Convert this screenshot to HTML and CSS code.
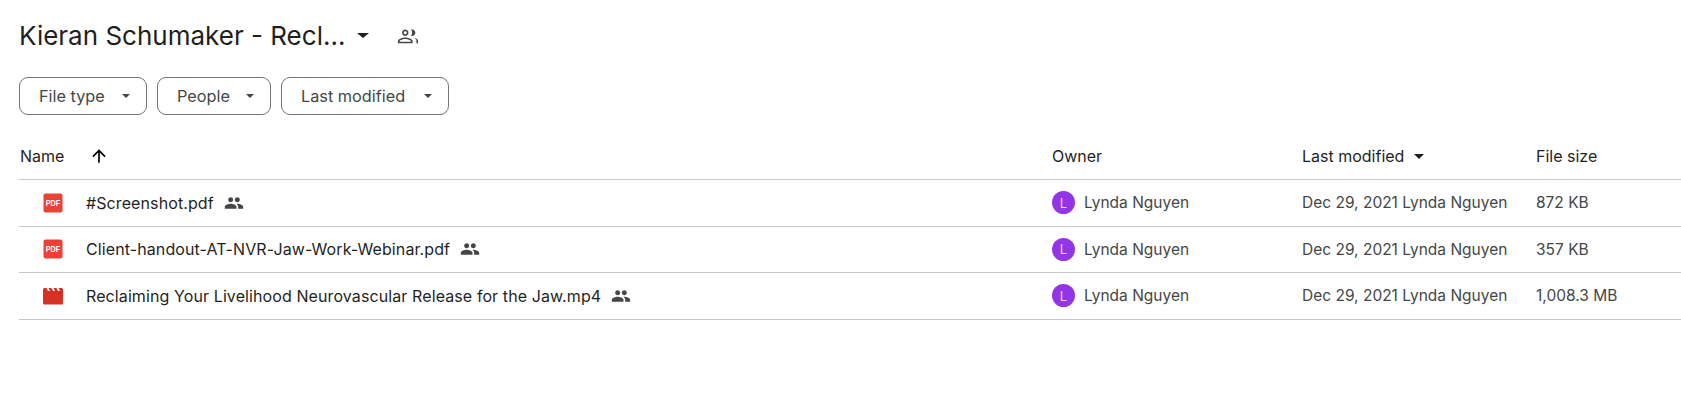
FILE: index.html
```html
<!DOCTYPE html>
<html lang="en">
<head>
  <meta charset="UTF-8" />
  <title>Kieran Schumaker - Reclaiming</title>
  <link rel="stylesheet" href="styles.css">
</head>
<body>

  <!-- Folder title -->
  <div class="title-row">
    <h1>Kieran Schumaker - Recl...</h1>
    <span class="caret title-caret"></span>
    <svg class="shared-outline" viewBox="0 0 24 24"><path d="M16.5 12c1.93 0 3.5-1.57 3.5-3.5S18.43 5 16.5 5c-.4 0-.79.07-1.15.2.7.85 1.15 2 1.15 3.3s-.45 2.45-1.15 3.3c.36.13.75.2 1.15.2zM9 12c1.93 0 3.5-1.57 3.5-3.5S10.93 5 9 5 5.500 6.570 5.500 8.500 7.070 12 9 12zm0-5.200c.94 0 1.700.76 1.700 1.700s-.76 1.700-1.700 1.700-1.700-.76-1.700-1.700.76-1.700 1.700-1.700zM9 13.500c-2.670 0-8 1.340-8 4V20h16v-2.500c0-2.660-5.330-4-8-4zm-6.200 4.700v-.7c.2-.72 3.300-2.200 6.200-2.200s6 1.480 6.200 2.200v.7H2.800zM18.500 13.700c1.400.95 2.700 2.200 2.700 3.800V20H23v-2.500c0-2.030-2.900-3.300-4.500-3.800z"/></svg>
  </div>

  <!-- Filter chips -->
  <div class="filters">
    <button class="chip chip-type">File type <span class="caret"></span></button>
    <button class="chip chip-people">People <span class="caret"></span></button>
    <button class="chip chip-modified">Last modified <span class="caret"></span></button>
  </div>

  <!-- File list -->
  <div class="file-list">
    <div class="row head">
      <div class="cell name-head">Name
        <svg class="arrow" viewBox="0 0 24 24"><path d="M20 12l-1.410-1.410L13 16.170V4h-2v12.170l-5.580-5.590L4 12l8 8 8-8z" transform="rotate(180 12 12)"/></svg>
      </div>
      <div class="cell">Owner</div>
      <div class="cell">Last modified <span class="caret sort-caret"></span></div>
      <div class="cell">File size</div>
    </div>

    <div class="row">
      <div class="cell file">
        <svg class="file-icon" viewBox="0 0 20 20"><rect x="0.500" y="0.500" width="19" height="19" rx="2" fill="#ea4335"/><text class="pdf-label" x="10" y="13.200" textLength="14.500" lengthAdjust="spacingAndGlyphs">PDF</text></svg>
        <span class="file-name">#Screenshot.pdf</span>
        <svg class="shared" viewBox="0 0 24 24"><path d="M16 11c1.660 0 2.990-1.340 2.990-3S17.660 5 16 5s-3 1.340-3 3 1.340 3 3 3zm-8 0c1.660 0 2.990-1.340 2.990-3S9.660 5 8 5 5 6.340 5 8s1.340 3 3 3zm0 2c-2.330 0-7 1.170-7 3.500V19h14v-2.500c0-2.330-4.670-3.500-7-3.500zm8 0c-.29 0-.62.02-.97.05 1.160.84 1.970 1.970 1.970 3.450V19h6v-2.500c0-2.330-4.670-3.500-7-3.500z"/></svg>
      </div>
      <div class="cell muted owner"><span class="avatar">L</span>Lynda Nguyen</div>
      <div class="cell muted">Dec 29, 2021 Lynda Nguyen</div>
      <div class="cell muted">872 KB</div>
    </div>

    <div class="row">
      <div class="cell file">
        <svg class="file-icon" viewBox="0 0 20 20"><rect x="0.500" y="0.500" width="19" height="19" rx="2" fill="#ea4335"/><text class="pdf-label" x="10" y="13.200" textLength="14.500" lengthAdjust="spacingAndGlyphs">PDF</text></svg>
        <span class="file-name">Client-handout-AT-NVR-Jaw-Work-Webinar.pdf</span>
        <svg class="shared" viewBox="0 0 24 24"><path d="M16 11c1.660 0 2.990-1.340 2.990-3S17.660 5 16 5s-3 1.340-3 3 1.340 3 3 3zm-8 0c1.660 0 2.990-1.340 2.990-3S9.660 5 8 5 5 6.340 5 8s1.340 3 3 3zm0 2c-2.330 0-7 1.170-7 3.500V19h14v-2.500c0-2.330-4.670-3.500-7-3.500zm8 0c-.29 0-.62.02-.97.05 1.160.84 1.970 1.970 1.970 3.450V19h6v-2.500c0-2.330-4.670-3.500-7-3.500z"/></svg>
      </div>
      <div class="cell muted owner"><span class="avatar">L</span>Lynda Nguyen</div>
      <div class="cell muted">Dec 29, 2021 Lynda Nguyen</div>
      <div class="cell muted">357 KB</div>
    </div>

    <div class="row">
      <div class="cell file">
        <svg class="file-icon" viewBox="0 0 20 20"><path d="M1.500 2H3.500L5 5H7L5.500 2H8.500L10 5H12L10.500 2H13.500L15 5H17L15.500 2H18.500A1.500 1.500 0 0 1 20 3.500V17A1.500 1.500 0 0 1 18.500 18.500H1.500A1.500 1.500 0 0 1 0 17V3.500A1.500 1.500 0 0 1 1.500 2Z" fill="#d93025"/></svg>
        <span class="file-name">Reclaiming Your Livelihood Neurovascular Release for the Jaw.mp4</span>
        <svg class="shared" viewBox="0 0 24 24"><path d="M16 11c1.660 0 2.990-1.340 2.990-3S17.660 5 16 5s-3 1.340-3 3 1.340 3 3 3zm-8 0c1.660 0 2.990-1.340 2.990-3S9.660 5 8 5 5 6.340 5 8s1.340 3 3 3zm0 2c-2.330 0-7 1.170-7 3.500V19h14v-2.500c0-2.330-4.670-3.500-7-3.500zm8 0c-.29 0-.62.02-.97.05 1.160.84 1.970 1.970 1.970 3.450V19h6v-2.500c0-2.330-4.670-3.500-7-3.500z"/></svg>
      </div>
      <div class="cell muted owner"><span class="avatar">L</span>Lynda Nguyen</div>
      <div class="cell muted">Dec 29, 2021 Lynda Nguyen</div>
      <div class="cell muted">1,008.3 MB</div>
    </div>
  </div>

</body>
</html>
```

FILE: styles.css
```css
/* Page */
body {
  margin: 0;
  padding: 0 0 0 19px;
  background: #fff;
  color: #1f1f1f;
  font-family: Inter, sans-serif;
  font-size: 16px;
}

/* Title row */
.title-row {
  display: flex;
  align-items: center;
  height: 35px;
  padding-top: 18px;
}

h1 {
  margin: 0;
  font-size: 26px;
  font-weight: 400;
}

.caret {
  display: inline-block;
  width: 0;
  height: 0;
  border-left: 4.500px solid transparent;
  border-right: 4.500px solid transparent;
  border-top: 4.500px solid #444746;
}

.title-caret {
  margin-left: 12px;
  border-left-width: 6px;
  border-right-width: 6px;
  border-top-width: 5px;
  border-top-color: #1f1f1f;
}

.shared-outline {
  width: 22px;
  height: 22px;
  margin-left: 28px;
  fill: #444746;
}

/* Filter chips */
.filters {
  display: flex;
  gap: 10px;
  margin-top: 24px;
}

.chip {
  display: flex;
  align-items: center;
  justify-content: space-between;
  height: 38px;
  padding: 0 16px 0 19px;
  border: 1px solid #747775;
  border-radius: 9px;
  background: #fff;
  color: #444746;
  font-family: Inter, sans-serif;
  font-size: 16.300px;
}

.chip-type { width: 128px; }
.chip-people { width: 114px; }
.chip-modified { width: 168px; }

/* File list */
.file-list {
  margin-top: 18px;
}

.row {
  display: grid;
  grid-template-columns: 1033px 250px 234px 1fr;
  align-items: center;
  height: 45.500px;
  border-bottom: 1px solid #c7c7c7;
}

.row.head {
  height: 46px;
}

.cell {
  display: flex;
  align-items: center;
}

.name-head {
  padding-left: 1px;
}

.arrow {
  width: 20px;
  height: 20px;
  margin-left: 25px;
}

.sort-caret {
  margin-left: 10px;
  border-left-width: 5.500px;
  border-right-width: 5.500px;
  border-top-width: 5px;
  border-top-color: #1f1f1f;
}

.file-icon {
  width: 20px;
  height: 20px;
  margin-left: 24px;
}

.pdf-label {
  fill: #fff;
  font-family: "Liberation Sans", sans-serif;
  font-size: 9px;
  font-weight: 700;
  text-anchor: middle;
}

.file-name {
  margin-left: 23px;
  letter-spacing: 0.1px;
}

.shared {
  width: 20px;
  height: 20px;
  margin-left: 10px;
  fill: #444746;
}

.muted {
  color: #444746;
  font-size: 15.500px;
}

.avatar {
  display: flex;
  align-items: center;
  justify-content: center;
  width: 23px;
  height: 23px;
  margin-right: 9px;
  border-radius: 50%;
  background: #9334e6;
  color: #e9d7fb;
  font-size: 13px;
}
```
